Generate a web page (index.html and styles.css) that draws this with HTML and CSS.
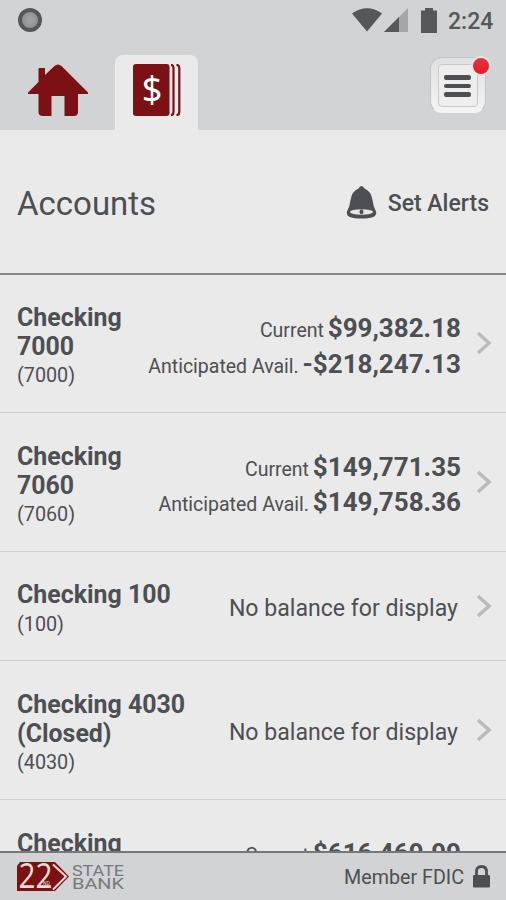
FILE: index.html
```html
<!DOCTYPE html>
<html lang="en">
<head>
    <meta charset="UTF-8">
    <meta name="viewport" content="width=device-width, initial-scale=1.0">
    <title>Accounts - 22nd State Bank</title>
    <link rel="stylesheet" href="styles.css">
</head>
<body>

<div class="status-bar">
    <span class="record-dot"></span>
    <div class="status-icons">
        <svg class="wifi" width="30" height="24" viewBox="0 0 30 24">
            <path d="M0 5.5 Q15 -5 30 5.5 L15 23.5Z" fill="#555758"/>
        </svg>
        <svg class="signal" width="24" height="24" viewBox="0 0 24 24">
            <path d="M0 24 24 0V24Z" fill="#a4a6a7"/>
            <path d="M0 24 15 9V24Z" fill="#555758"/>
        </svg>
        <svg class="battery" width="16" height="25" viewBox="0 0 16 25">
            <path d="M4 0H12V2.5H16V25H0V2.5H4Z" fill="#555758"/>
        </svg>
        <span class="clock">2:24</span>
    </div>
</div>

<nav>
    <a class="tab">
        <svg width="60" height="53" viewBox="0 0 60 53">
            <path d="M10.5 5Q10.5 4 11.5 4H17V11L26.500 2Q30 -1.200 33.500 2L60 28.500V30H50V48Q50 52 46 52H36.500V32H23.500V52H15Q10.500 52 10.500 48V30H0V28.500L10.500 18Z" fill="#7b1114"/>
        </svg>
    </a>
    <a class="tab active">
        <svg width="48" height="52" viewBox="0 0 48 52">
            <rect x="0" y="0" width="36.500" height="52" rx="3" fill="#7b1114"/>
            <path d="M38 .8Q40.500 1 40.500 4V48Q40.500 51 38 51.200" fill="none" stroke="#7b1114" stroke-width="2.200"/>
            <path d="M43.500 .8Q46.300 1 46.300 4V48Q46.300 51 43.500 51.200" fill="none" stroke="#7b1114" stroke-width="2.200"/>
            <text x="19" y="38" text-anchor="middle" class="dollar">$</text>
        </svg>
    </a>
    <button class="menu-button">
        <span class="menu-face">
            <span class="bar"></span>
            <span class="bar"></span>
            <span class="bar"></span>
        </span>
        <span class="badge"></span>
    </button>
</nav>

<header>
    <h1>Accounts</h1>
    <a class="alerts">
        <svg width="31" height="33" viewBox="0 0 31 33">
            <path d="M15.500 0Q17.500 0 18.500 2.500Q25 5 26.500 14Q27 20 30 25.500Q32 32.500 15.500 32.500Q-1 32.500 1 25.500Q4 20 4.500 14Q6 5 12.500 2.500Q13.500 0 15.500 0Z" fill="#4d4f52"/>
            <ellipse cx="15.500" cy="26" rx="11.500" ry="2.700" fill="#e6e6e6"/>
            <ellipse cx="15.500" cy="25.800" rx="2" ry="2.500" fill="#4d4f52"/>
        </svg>
        <span>Set Alerts</span>
    </a>
</header>

<main>
    <div class="account">
        <div class="account-name">
            <h2>Checking<br>7000</h2>
            <p>(7000)</p>
        </div>
        <div class="balances">
            <div><span>Current</span> <b>$99,382.18</b></div>
            <div><span>Anticipated Avail.</span> <b>-$218,247.13</b></div>
        </div>
        <svg class="chevron" width="16" height="24" viewBox="0 0 16 24"><path d="M2 2 13 12 2 22"/></svg>
    </div>
    <div class="account">
        <div class="account-name">
            <h2>Checking<br>7060</h2>
            <p>(7060)</p>
        </div>
        <div class="balances">
            <div><span>Current</span> <b>$149,771.35</b></div>
            <div><span>Anticipated Avail.</span> <b>$149,758.36</b></div>
        </div>
        <svg class="chevron" width="16" height="24" viewBox="0 0 16 24"><path d="M2 2 13 12 2 22"/></svg>
    </div>
    <div class="account">
        <div class="account-name">
            <h2>Checking 100</h2>
            <p>(100)</p>
        </div>
        <div class="no-balance">No balance for display</div>
        <svg class="chevron" width="16" height="24" viewBox="0 0 16 24"><path d="M2 2 13 12 2 22"/></svg>
    </div>
    <div class="account">
        <div class="account-name">
            <h2>Checking 4030<br>(Closed)</h2>
            <p>(4030)</p>
        </div>
        <div class="no-balance">No balance for display</div>
        <svg class="chevron" width="16" height="24" viewBox="0 0 16 24"><path d="M2 2 13 12 2 22"/></svg>
    </div>
    <div class="account partial">
        <div class="account-name">
            <h2>Checking</h2>
        </div>
        <div class="balances">
            <div><span>Current</span> <b>$616,469.99</b></div>
        </div>
    </div>
</main>

<footer>
    <svg width="110" height="32" viewBox="0 0 110 32">
        <path d="M4 1H39L53 15.500 39 30H1V5Z" fill="#7b1114"/>
        <path d="M37 3.500 50 15.500 37 28.500" fill="none" stroke="#eadfd6" stroke-width="2"/>
        <text x="2.500" y="26.500" class="logo-number" textLength="34" lengthAdjust="spacingAndGlyphs">22</text>
        <text x="27" y="23.500" class="logo-nd">ND</text>
        <text x="56" y="14.500" class="logo-name" textLength="52" lengthAdjust="spacingAndGlyphs">STATE</text>
        <text x="56" y="28" class="logo-name" textLength="52" lengthAdjust="spacingAndGlyphs">BANK</text>
    </svg>
    <div class="fdic">
        <span>Member FDIC</span>
        <svg width="17" height="23" viewBox="0 0 17 23">
            <path d="M3.500 11V6.500Q3.500 1.500 8.500 1.500T13.500 6.500V11" fill="none" stroke="#4d4f52" stroke-width="2.800"/>
            <rect x="0" y="10" width="17" height="12.500" rx="1" fill="#4d4f52"/>
        </svg>
    </div>
</footer>

</body>
</html>
```
FILE: styles.css
```css
* {
    box-sizing: border-box;
}

body {
    font-family: Roboto, sans-serif;
    margin: 0;
    height: 900px;
    display: flex;
    flex-direction: column;
    overflow: hidden;
    background-color: #eaeaea;
    color: #4d4f52;
}

h1, h2, p {
    margin: 0;
}

svg {
    display: block;
    flex-shrink: 0;
}

.status-bar {
    display: flex;
    justify-content: space-between;
    height: 41px;
    padding: 8px 12px 0 18px;
    background-color: #d1d3d4;
}

.record-dot {
    width: 24px;
    height: 24px;
    border: 4px solid #555758;
    border-radius: 50%;
    background: radial-gradient(#a6a6a6, #858788);
}

.status-icons {
    display: flex;
}

.signal {
    margin-left: 2px;
}

.battery {
    margin-left: 13px;
}

.clock {
    margin-left: 11px;
    width: 46px;
    font-size: 23px;
    font-weight: 500;
    line-height: 27px;
    color: #555758;
}

nav {
    display: flex;
    height: 89px;
    padding: 14px 20px 0 0;
    background-color: #d1d3d4;
}

.tab {
    width: 115px;
    padding: 9px 0 0 28px;
}

.tab.active {
    width: 83px;
    padding: 9px 0 0 18px;
    border-radius: 8px 8px 0 0;
    background-color: #eaeaea;
}

.dollar {
    font-family: "Noto Sans", sans-serif;
    font-size: 36px;
    fill: #fff;
}

.menu-button {
    position: relative;
    width: 56px;
    height: 56px;
    margin: 2px 0 0 auto;
    padding: 6px 7px 5px;
    border: 1px solid #c3c5c6;
    border-bottom-color: #f4f4f4;
    border-radius: 12px;
    background: linear-gradient(#dfe0e1, #f4f4f4);
}

.menu-face {
    display: flex;
    flex-direction: column;
    align-items: center;
    justify-content: center;
    gap: 4px;
    height: 43px;
    border: 1px solid #c8c9ca;
    border-radius: 4px;
    background-color: #eee;
}

.bar {
    position: relative;
    left: -1px;
    top: 0.5px;
    width: 27px;
    height: 4.5px;
    border-radius: 2px;
    background-color: #4d4f52;
}

.badge {
    position: absolute;
    top: -2px;
    right: -6px;
    width: 20px;
    height: 20px;
    border: 2px solid #f3e3e3;
    border-radius: 50%;
    background: linear-gradient(#dd3540, #f01722);
}

header {
    display: flex;
    align-items: center;
    justify-content: space-between;
    flex-shrink: 0;
    height: 144.500px;
    padding: 4px 17px 0;
    border-bottom: 2px solid #85878a;
}

h1 {
    font-size: 33px;
    font-weight: 400;
}

.alerts {
    display: flex;
    align-items: center;
    gap: 11px;
    font-size: 23px;
    font-weight: 500;
}

.alerts svg {
    margin-top: -2px;
}

main {
    flex: 1;
    min-height: 0;
    overflow: hidden;
}

.account {
    display: flex;
    align-items: center;
    padding: 28.500px 14px 20.800px 17px;
    border-bottom: 1px solid #d0d1d2;
}

.account-name h2 {
    font-size: 24.900px;
    line-height: 29.200px;
    font-weight: 700;
}

.account-name p {
    font-size: 19.800px;
    line-height: 30px;
}

.balances {
    flex: 1;
    text-align: right;
    white-space: nowrap;
    line-height: 35.500px;
    font-size: 19.500px;
    margin: -1px 15px 0 0;
}

.balances div {
    height: 35.500px;
}

.balances b {
    font-size: 26px;
    margin-left: -1px;
}

.no-balance {
    flex: 1;
    text-align: right;
    margin: -3px 18px 0 0;
    font-size: 23.100px;
}

.chevron {
    margin-top: -8px;
}

.chevron path {
    fill: none;
    stroke: #bcbcbc;
    stroke-width: 3.500;
}

.account.partial {
    align-items: flex-start;
}

.partial .balances {
    margin: 7px 31px 0 0;
}

footer {
    display: flex;
    justify-content: space-between;
    flex-shrink: 0;
    height: 49px;
    padding: 8px 16px 0;
    border-top: 2px solid #75777a;
    background-color: #d1d3d4;
}

.logo-number {
    font-family: "Open Sans", sans-serif;
    font-size: 34px;
    font-weight: 400;
    fill: #eadfd6;
}

.logo-nd {
    font-size: 5px;
    fill: #eadfd6;
}

.logo-name {
    font-size: 15.500px;
    fill: #77797c;
}

.fdic {
    display: flex;
    gap: 9px;
    font-size: 19.700px;
    line-height: 33px;
}

.fdic svg {
    margin-top: 4px;
}
```
